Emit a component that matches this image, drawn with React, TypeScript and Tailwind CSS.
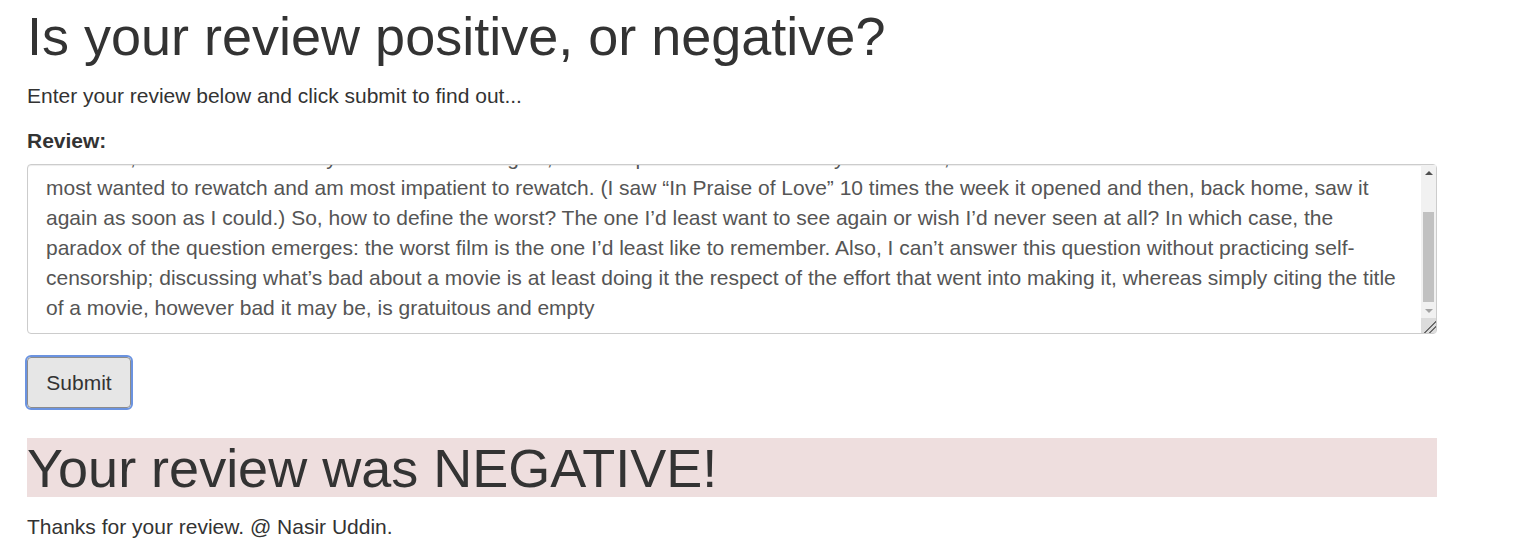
import { useEffect, useRef } from "react";

const review =
  "Asked to name the best and the worst films I’ve ever seen, I run into a problem of principle right away, since the best film I’ve seen is, by definition, the one that has stayed with me the longest, whose spirit I’ve most fervently embraced, and that I’ve\n" +
  "most wanted to rewatch and am most impatient to rewatch. (I saw “In Praise of Love” 10 times the week it opened and then, back home, saw it again as soon as I could.) So, how to define the worst? The one I’d least want to see again or wish I’d never seen at all? In which case, the paradox of the question emerges: the worst film is the one I’d least like to remember. Also, I can’t answer this question without practicing self-censorship; discussing what’s bad about a movie is at least doing it the respect of the effort that went into making it, whereas simply citing the title of a movie, however bad it may be, is gratuitous and empty";

function Scrollbar() {
  return (
    <div className="pointer-events-none absolute right-[1px] top-[1px] flex h-[153px] w-[15px] flex-col bg-[#f1f1f1]">
      <div className="flex h-[15px] items-center justify-center">
        <div className="h-0 w-0 border-x-[4px] border-b-[4px] border-x-transparent border-b-[#505050]" />
      </div>
      <div className="flex flex-1 flex-col justify-end px-[2px] pb-[1px]">
        <div className="h-[90px] bg-[#c1c1c1]" />
      </div>
      <div className="flex h-[15px] items-center justify-center">
        <div className="h-0 w-0 border-x-[4px] border-t-[4px] border-x-transparent border-t-[#a3a3a3]" />
      </div>
    </div>
  );
}

export default function App() {
  const ref = useRef<HTMLTextAreaElement>(null);

  useEffect(() => {
    if (ref.current) ref.current.scrollTop = ref.current.scrollHeight;
  }, []);

  return (
    <div className="min-h-screen bg-white font-['Liberation_Sans',Arial,sans-serif] text-[#333]">
      <div className="w-[1410px] ml-[27px]">
        <h1 className="text-[54px] leading-[1.1] pt-[7px]">Is your review positive, or negative?</h1>
        <p className="text-[21px] leading-[30px] mt-[15px]">Enter your review below and click submit to find out...</p>

        <form className="mt-[17px]" onSubmit={(e) => e.preventDefault()}>
          <label className="block text-[21px] font-bold leading-[26px]">Review:</label>
          <div className="relative mt-[10px]">
            <textarea
              ref={ref}
              defaultValue={review}
              className="block h-[170px] w-full resize-y overflow-hidden rounded-[4px] border border-[#ccc] py-[10px] pl-[18px] pr-[33px] text-[21px] leading-[30px] text-[#555] shadow-[inset_0_1px_1px_rgba(0,0,0,0.075)] outline-none [&::-webkit-resizer]:[background:linear-gradient(135deg,transparent_58%,#6b6b6b_58%,#6b6b6b_64%,transparent_64%,transparent_76%,#6b6b6b_76%,#6b6b6b_82%,transparent_82%),#dcdcdc]"
            />
            <Scrollbar />
          </div>
          <button
            type="submit"
            className="mt-[23px] h-[51px] w-[104px] rounded-[4px] border border-[#8c8c8c] bg-[#e6e6e6] text-[21px] text-[#333] outline outline-2 outline-[#6b93e0] outline-offset-0"
          >
            Submit
          </button>
        </form>

        <div className="mt-[30px] bg-[#eedede] h-[59px] flex items-center">
          <h2 className="text-[54px] leading-none">Your review was NEGATIVE!</h2>
        </div>

        <p className="mt-[17px] text-[21px] leading-[26px]">Thanks for your review. @ Nasir Uddin.</p>
      </div>
    </div>
  );
}
